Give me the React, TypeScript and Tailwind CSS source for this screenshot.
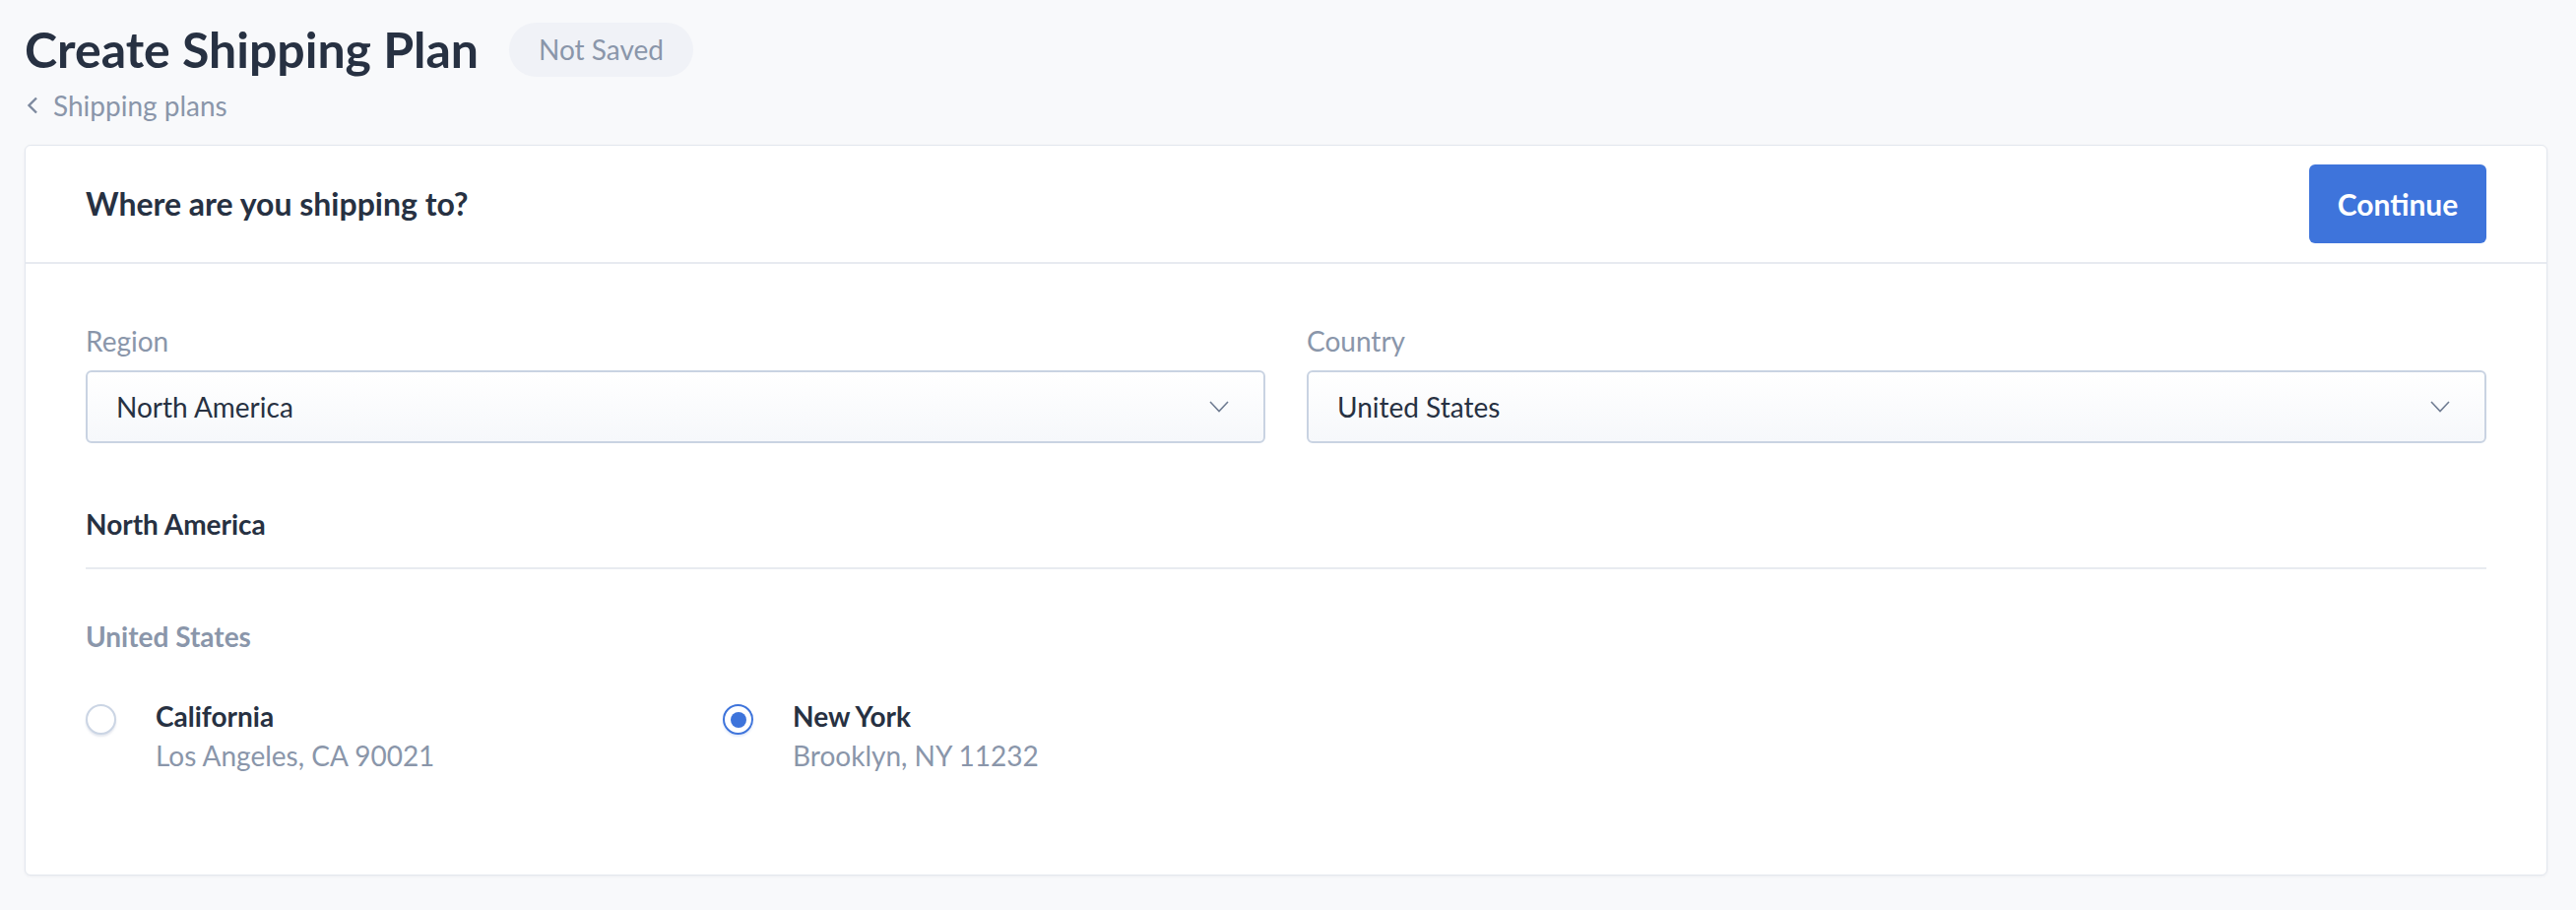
import React from "react";

type Destination = {
  id: string;
  name: string;
  address: string;
  selected: boolean;
};

const destinations: Destination[] = [
  { id: "ca", name: "California", address: "Los Angeles, CA 90021", selected: false },
  { id: "ny", name: "New York", address: "Brooklyn, NY 11232", selected: true },
];

const ChevronDown = () => (
  <svg width="20" height="12" viewBox="0 0 20 12" fill="none">
    <path d="M1 1l9 9.5L19 1" stroke="#6f7c92" strokeWidth="1.6" />
  </svg>
);

const SelectField = ({ label, value }: { label: string; value: string }) => (
  <div className="flex flex-col">
    <label className="text-[28px] leading-[36px] text-[#8a96aa]">{label}</label>
    <div className="mt-[12px] h-[74px] flex items-center justify-between pl-[29px] pr-[35px] border-2 border-[#c9d3e2] rounded-[6px] bg-gradient-to-b from-white to-[#f6f8fb]">
      <span className="text-[28px] text-[#273142]">{value}</span>
      <ChevronDown />
    </div>
  </div>
);

const Radio = ({ checked }: { checked: boolean }) =>
  checked ? (
    <div className="mt-[8px] w-[31px] h-[31px] shrink-0 rounded-full border-2 border-[#3e74db] flex items-center justify-center shadow-[0_2px_2px_rgba(62,116,219,0.15)]">
      <div className="w-[16px] h-[16px] rounded-full bg-[#3e74db]" />
    </div>
  ) : (
    <div className="mt-[8px] w-[31px] h-[31px] shrink-0 rounded-full border-2 border-[#cbd5e4] bg-white shadow-[0_2px_2px_rgba(150,165,190,0.25)]" />
  );

export default function App() {
  return (
    <div className="min-h-screen bg-[#f8f9fb] pl-[25px] pr-[29px] pt-[22px] font-['Lato',sans-serif]">
      <div className="flex items-center gap-[31px] h-[56px]">
        <h1 className="text-[50px] font-bold leading-none text-[#273142]">Create Shipping Plan</h1>
        <span className="h-[55px] px-[30px] flex items-center rounded-full bg-[#f0f2f7] text-[28px] text-[#8a96aa]">
          Not Saved
        </span>
      </div>

      <a href="#" className="mt-[11px] flex items-center gap-[15px] text-[28px] leading-[36px] text-[#8a96aa]">
        <svg width="12" height="18" viewBox="0 0 12 18" fill="none" className="ml-[2px]">
          <path d="M10 1.5L2.5 9l7.5 7.5" stroke="#7d899e" strokeWidth="2.4" />
        </svg>
        Shipping plans
      </a>

      <div className="mt-[22px] bg-white border border-[#e3e7ee] rounded-[6px] shadow-[0_1px_3px_rgba(30,40,60,0.06)]">
        <div className="h-[120px] flex items-center justify-between px-[61px] border-b-2 border-[#e7eaf0]">
          <h2 className="text-[32px] font-bold text-[#273142]">Where are you shipping to?</h2>
          <button className="w-[180px] h-[80px] rounded-[6px] bg-[#3e74db] text-white text-[30px] font-bold">
            Continue
          </button>
        </div>

        <div className="px-[61px] pt-[60px] pb-[101px]">
          <div className="grid grid-cols-2 gap-x-[42px]">
            <SelectField label="Region" value="North America" />
            <SelectField label="Country" value="United States" />
          </div>

          <h3 className="mt-[64px] text-[28px] leading-[36px] font-bold text-[#273142]">North America</h3>
          <div className="mt-[26px] h-[2px] bg-[#e8ebf0]" />

          <h4 className="mt-[50px] text-[28px] leading-[36px] font-bold text-[#8a96aa]">United States</h4>

          <div className="mt-[43px] grid grid-cols-[647px_647px]">
            {destinations.map((d) => (
              <div key={d.id} className="flex gap-[40px]">
                <Radio checked={d.selected} />
                <div className="flex flex-col">
                  <span className="text-[28px] leading-[40px] font-bold text-[#273142]">{d.name}</span>
                  <span className="text-[28px] leading-[40px] text-[#8a96aa]">{d.address}</span>
                </div>
              </div>
            ))}
          </div>
        </div>
      </div>
    </div>
  );
}
